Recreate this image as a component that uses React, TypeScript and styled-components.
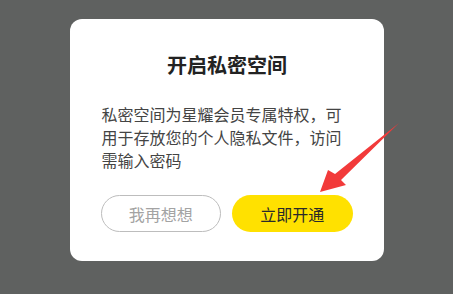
import React from "react";
import styled, { createGlobalStyle } from "styled-components";

const Global = createGlobalStyle`
  html, body { margin: 0; padding: 0; background: #5f6160; }
  body { font-family: "Noto Sans CJK SC", "Noto Sans", sans-serif; }
`;

const Page = styled.div`
  position: relative;
  width: 453px;
  height: 294px;
  display: flex;
  justify-content: center;
  align-items: flex-start;
  padding-top: 19px;
  box-sizing: border-box;
  background: #5f6160;
`;

const Card = styled.div`
  width: 314px;
  height: 242px;
  box-sizing: border-box;
  background: #ffffff;
  border-radius: 12px;
  padding: 32px 31px 0 32px;
  display: flex;
  flex-direction: column;
`;

const Title = styled.div`
  font-size: 20px;
  line-height: 28px;
  font-weight: 700;
  color: #222;
  text-align: center;
`;

const Body = styled.div`
  margin-top: 24px;
  font-size: 16px;
  line-height: 23px;
  color: #444;
`;

const Actions = styled.div`
  margin-top: 23px;
  margin-left: -1px;
  display: flex;
  gap: 11px;
`;

const Button = styled.button<{ $primary?: boolean }>`
  width: 121px;
  height: 37px;
  border-radius: 19px;
  box-sizing: border-box;
  font-family: inherit;
  font-size: 16px;
  padding: 0;
  cursor: pointer;
  border: ${(p) => (p.$primary ? "none" : "1.5px solid #bdbdbd")};
  background: ${(p) => (p.$primary ? "#ffe100" : "#ffffff")};
  color: ${(p) => (p.$primary ? "#2a2a2a" : "#a3a3a3")};
`;

const ArrowLayer = styled.svg`
  position: absolute;
  left: 0;
  top: 0;
  pointer-events: none;
`;

export default function App() {
  return (
    <>
      <Global />
      <Page>
        <Card>
          <Title>开启私密空间</Title>
          <Body>私密空间为星耀会员专属特权，可用于存放您的个人隐私文件，访问需输入密码</Body>
          <Actions>
            <Button>我再想想</Button>
            <Button $primary>立即开通</Button>
          </Actions>
        </Card>
        <ArrowLayer width="453" height="294" viewBox="0 0 453 294">
          <polygon
            points="399,123 335,174 328,170 320,192 346,185 341,180 399,123"
            fill="#f23a3a"
          />
        </ArrowLayer>
      </Page>
    </>
  );
}
